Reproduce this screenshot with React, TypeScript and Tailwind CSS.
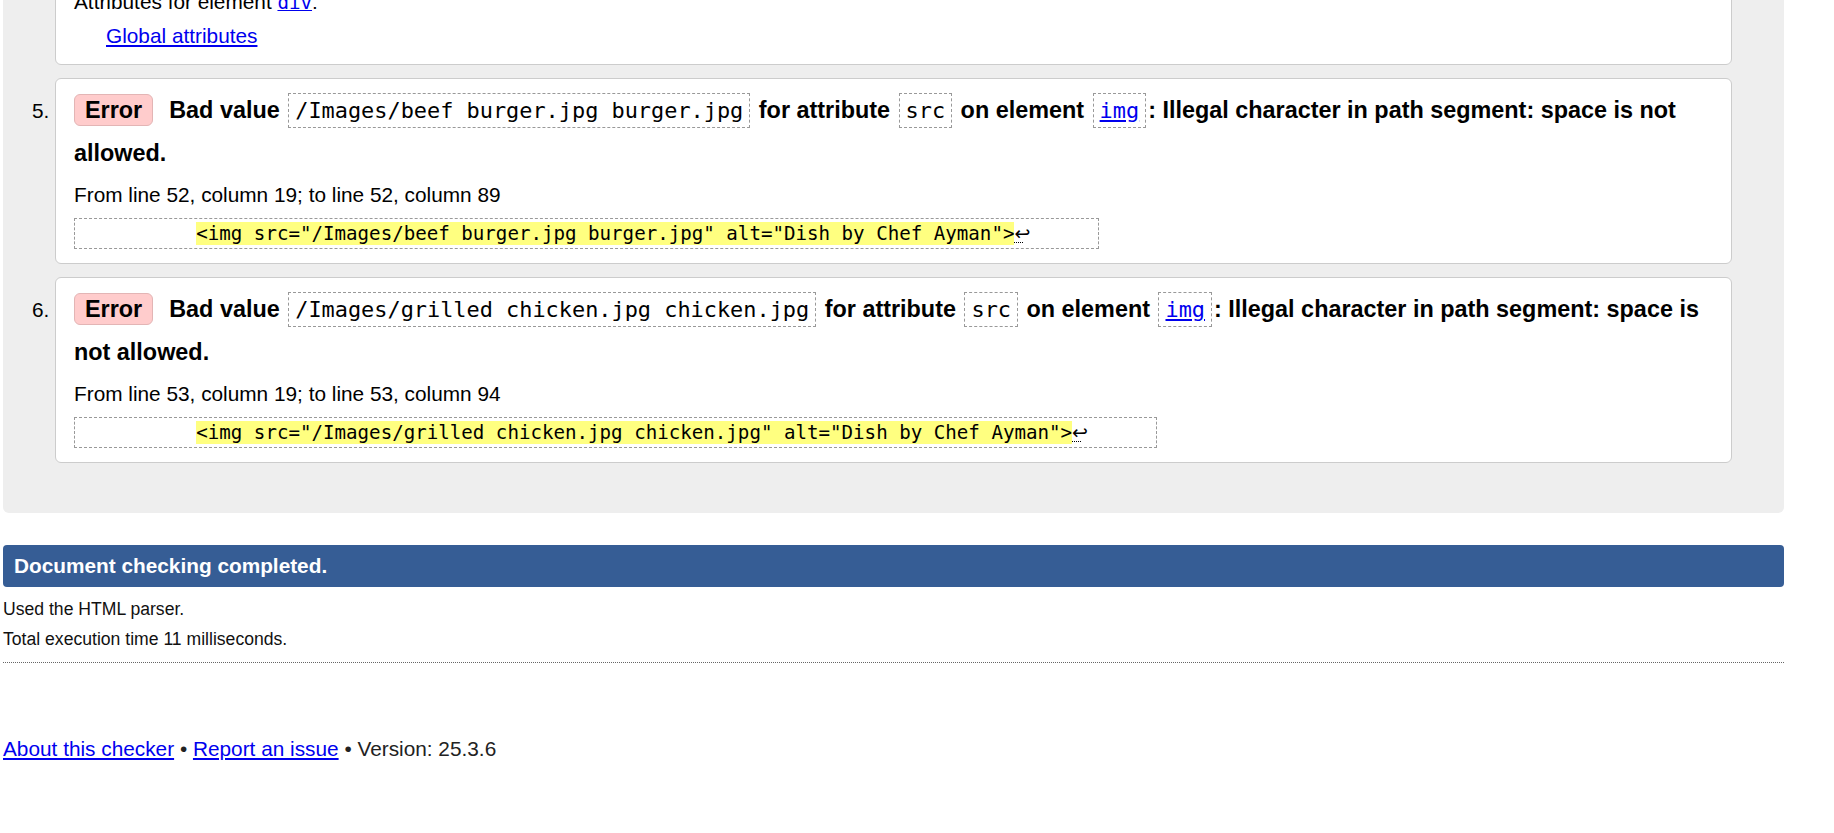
import React from "react";

const MONO = "font-['DejaVu_Sans_Mono','Liberation_Mono',monospace]";

function Code({ children }: { children: React.ReactNode }) {
  return (
    <code
      className={`${MONO} inline-block border border-dashed border-[#999] px-[6px] mx-[2px] text-[21.9px] leading-[33px] font-normal`}
    >
      {children}
    </code>
  );
}

function ErrorItem({
  path,
  from,
  extract,
}: {
  path: string;
  from: string;
  extract: string;
}) {
  return (
    <li className="mt-[13px] rounded-[6px] border border-[#cccccc] bg-white pl-[18px] pr-[18px] pt-[10px] pb-[14px]">
      <p className="text-[23.4px] font-bold leading-[43px]">
        <span className="inline-block rounded-[6px] border border-[#e3b5b5] bg-[#ffcccc] px-[10px] leading-[30px] mr-[16px]">
          Error
        </span>
        <span>
          Bad value <Code>{path}</Code> for attribute <Code>src</Code> on element{" "}
          <Code>
            <a href="#" className="text-[#0000ee] underline">
              img
            </a>
          </Code>
          : Illegal character in path segment: space is not allowed.
        </span>
      </p>
      <p className="mt-[8px] text-[20.8px] leading-[24px]">{from}</p>
      <div className="mt-[10px]">
        <code
          className={`${MONO} inline-block whitespace-pre border border-dashed border-[#999] px-[6px] py-[4px] text-[19.15px] leading-[21px]`}
        >
          {"          "}
          <span className="bg-[#ffff80]">{extract}</span>
          <span className="relative inline-block w-[20px] font-['DejaVu_Sans',sans-serif] text-[19px] leading-[21px]">
            ↩
            <span className="absolute left-0 bottom-[1px] w-[9px] border-b border-dotted border-black" />
          </span>
          {"     "}
        </code>
      </div>
    </li>
  );
}

export default function App() {
  return (
    <div className="h-[833px] overflow-hidden bg-white font-['Liberation_Sans',Arial,Helvetica,sans-serif] text-[20.8px] text-black">
      <div className="-mt-[41px] ml-[3px] w-[1781px]">
        <div className="rounded-[6px] bg-[#eeeeee] pt-[20px] pb-[50px]">
          <ol start={4} className="list-decimal pl-[52px] pr-[52px]">
            <li className="list-none rounded-[6px] border border-[#cccccc] bg-white pl-[18px] pr-[18px] pt-[10px] pb-[16px]">
              <p className="leading-[24px]">
                Attributes for element{" "}
                <code className={`${MONO} text-[19.15px]`}>
                  <a href="#" className="text-[#0000ee] underline">
                    div
                  </a>
                </code>
                :
              </p>
              <div className="mt-[9px] pl-[32px] leading-[24px]">
                <a href="#" className="text-[#0000ee] underline">
                  Global attributes
                </a>
              </div>
            </li>
            <ErrorItem
              path="/Images/beef burger.jpg burger.jpg"
              from="From line 52, column 19; to line 52, column 89"
              extract={'<img src="/Images/beef burger.jpg burger.jpg" alt="Dish by Chef Ayman">'}
            />
            <ErrorItem
              path="/Images/grilled chicken.jpg chicken.jpg"
              from="From line 53, column 19; to line 53, column 94"
              extract={'<img src="/Images/grilled chicken.jpg chicken.jpg" alt="Dish by Chef Ayman">'}
            />
          </ol>
        </div>

        <div className="mt-[32px] rounded-[4px] bg-[#365d95] pl-[11px] text-[20.8px] font-bold leading-[42px] text-white">
          Document checking completed.
        </div>
        <p className="mt-[12px] text-[17.6px] leading-[20px] text-[#111]">Used the HTML parser.</p>
        <p className="mt-[10px] text-[17.6px] leading-[20px] text-[#111]">
          Total execution time 11 milliseconds.
        </p>
        <hr className="mt-[13px] border-0 border-t border-dotted border-[#666]" />
        <p className="mt-[74px] leading-[24px] text-[#222]">
          <a href="#" className="text-[#0000ee] underline">
            About this checker
          </a>{" "}
          •{" "}
          <a href="#" className="text-[#0000ee] underline">
            Report an issue
          </a>{" "}
          • Version: 25.3.6
        </p>
      </div>
    </div>
  );
}
